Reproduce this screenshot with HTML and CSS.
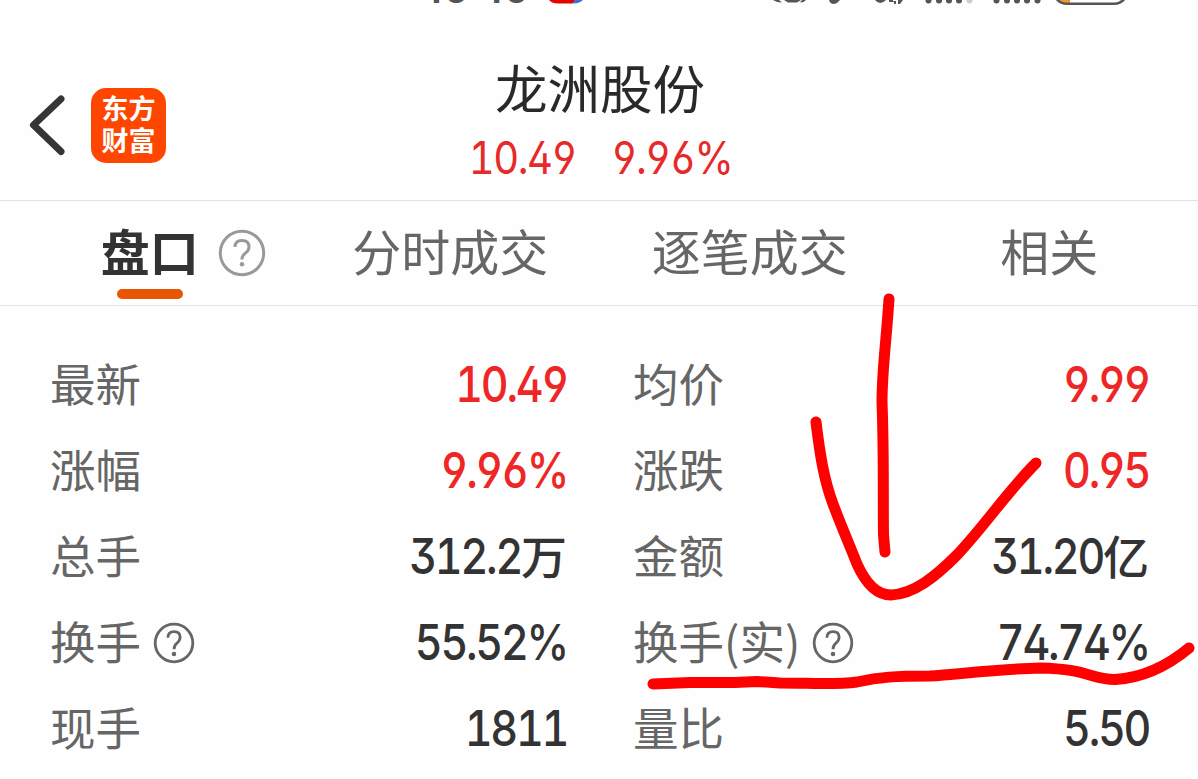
FILE: index.html
```html
<!DOCTYPE html>
<html lang="zh-CN">
<head>
    <meta charset="UTF-8">
    <title>龙洲股份</title>
    <link rel="stylesheet" href="styles.css">
</head>
<body>
<div class="page">
    <div class="statusbar">
        <div class="clock"><span>10</span><span>10</span></div>
        <svg class="status-icons" width="1198" height="8" viewBox="0 0 1198 8">
            <path d="M549 0Q552 3.500 558 3.500H572L576 0Z" fill="#e60000"/>
            <path d="M576 0L571 3.500Q579 4 583 0Z" fill="#3b6fd0"/>
            <g fill="#555">
                <path d="M773 0Q777 2.500 782 2.500L779 0ZM784 0L788 2.500H797L801 0ZM802 0L800 2.500Q804 2.500 806 0Z"/>
                <path d="M829 0Q830 4 834 4Q838 3 840 0Z"/>
                <path d="M875 0Q880 6 886 0ZM889 0H893V1H896V4H894V2H889ZM898 0H903L900 4H898Z"/>
            </g>
            <g stroke="#555" stroke-width="6" stroke-linecap="round">
                <path d="M928.500-3V.5M939-3V.5M949-3V.5M959-3V.5M996.500-3V.5M1007-3V.5M1017-3V.5M1027-3V.5M1037.500-3V.5"/>
                <path d="M969.500-3V.5" stroke="#ccc"/>
            </g>
            <path d="M1060 0H1070V3Q1063 3 1060 0Z" fill="#f7941d"/>
            <path d="M1056-2Q1060 3.800 1067 3.800H1114Q1121 3.800 1125-2" fill="none" stroke="#555" stroke-width="2.600"/>
        </svg>
    </div>

    <header class="header">
        <div class="left">
            <svg class="back" width="38" height="64" viewBox="0 0 38 64">
                <path d="M33 6L5.500 32L33 58.500" fill="none" stroke="#333536" stroke-width="7" stroke-linecap="round" stroke-linejoin="round"/>
            </svg>
            <div class="logo">东方<br>财富</div>
        </div>
        <div class="stock">
            <h1>龙洲股份</h1>
            <div class="quote"><span class="num">10.49</span><span class="num">9.96%</span></div>
        </div>
    </header>

    <nav class="tabs">
        <div class="tab active">盘口
            <svg class="tab-help" width="48" height="48" viewBox="0 0 48 48">
                <circle cx="24" cy="24" r="21.700"/>
                <path d="M17 18Q17 11.500 24 11.500Q31 11.500 31 18Q31 21.500 27.500 24Q24 26.500 24 30.500"/>
                <circle class="dot" cx="24" cy="35.300" r="2.200"/>
            </svg>
        </div>
        <div class="tab">分时成交</div>
        <div class="tab">逐笔成交</div>
        <div class="tab">相关</div>
    </nav>

    <main class="data">
        <div class="col">
            <div class="row"><span class="label">最新</span><span class="value up"><b class="num">10.49</b></span></div>
            <div class="row"><span class="label">涨幅</span><span class="value up"><b class="num">9.96%</b></span></div>
            <div class="row"><span class="label">总手</span><span class="value"><b class="num">312.2</b><i>万</i></span></div>
            <div class="row">
                <span class="label">换手</span>
                <svg class="help" width="42" height="42" viewBox="0 0 48 48">
                    <circle cx="24" cy="24" r="21.500"/>
                    <path d="M17 18Q17 11 24 11Q31 11 31 17.500Q31 21 27.500 24Q24 27 24 31"/>
                    <circle class="dot" cx="24" cy="36.500" r="2.600"/>
                </svg>
                <span class="value"><b class="num">55.52%</b></span>
            </div>
            <div class="row"><span class="label">现手</span><span class="value"><b class="num">1811</b></span></div>
        </div>
        <div class="col">
            <div class="row"><span class="label">均价</span><span class="value up"><b class="num">9.99</b></span></div>
            <div class="row"><span class="label">涨跌</span><span class="value up"><b class="num">0.95</b></span></div>
            <div class="row"><span class="label">金额</span><span class="value"><b class="num">31.20</b><i>亿</i></span></div>
            <div class="row">
                <span class="label">换手(实)</span>
                <svg class="help" width="42" height="42" viewBox="0 0 48 48">
                    <circle cx="24" cy="24" r="21.500"/>
                    <path d="M17 18Q17 11 24 11Q31 11 31 17.500Q31 21 27.500 24Q24 27 24 31"/>
                    <circle class="dot" cx="24" cy="36.500" r="2.600"/>
                </svg>
                <span class="value"><b class="num">74.74%</b></span>
            </div>
            <div class="row"><span class="label">量比</span><span class="value"><b class="num">5.50</b></span></div>
        </div>
    </main>

    <!-- hand-drawn marks -->
    <svg class="marks" width="1198" height="779" viewBox="0 0 1198 779">
        <path d="M889 299C886 345 882 370 882 402C884 455 883 500 883.500 535L885 552"/>
        <path d="M816 422C820 455 824 480 833 504C842 528 850 546 857 564C866 584 877 595 891 595C914 594 935 577 957 555C987 523 1006 493 1036 463"/>
        <path d="M653 684L690 682.500H735L757 681.500L780 683C810 683 835 685 857 682C880 677 895 676 930 676C960 674 1000 669 1040 668C1088 669 1090 679 1115 679.500C1140 678 1165 668 1189 648"/>
    </svg>
</div>
</body>
</html>
```

FILE: styles.css
```css
* {
    box-sizing: border-box;
}
body {
    margin: 0;
    background: #fefefe;
    font-family: "Noto Sans CJK SC", sans-serif;
    color: #333;
}
.page {
    position: relative;
    width: 1198px;
    height: 779px;
    overflow: hidden;
}
.statusbar {
    position: relative;
    height: 30px;
    overflow: hidden;
}
.clock {
    display: flex;
    gap: 15px;
    margin: -34px 0 0 425px;
    font-family: Inter, sans-serif;
    font-size: 40px;
    line-height: 46px;
    font-weight: 600;
    letter-spacing: 1px;
    color: #555;
}
.status-icons {
    position: absolute;
    left: 0;
    top: 0;
}
.header {
    display: grid;
    grid-template-columns: 400px 400px 1fr;
    height: 171px;
    border-bottom: 1px solid #e3e3e3;
}
.left {
    display: flex;
    align-items: center;
    gap: 25px;
    padding: 20px 0 0 28px;
}
.logo {
    width: 75px;
    height: 75px;
    padding-top: 4px;
    border-radius: 15px;
    background: #ff4600;
    color: #fff;
    text-align: center;
    font-size: 27px;
    line-height: 32px;
    font-weight: 700;
}
.stock {
    text-align: center;
}
.stock h1 {
    margin: 21px 0 3px;
    font-size: 52.5px;
    line-height: 70px;
    font-weight: 400;
    color: #292929;
}
/* narrow digits with open 6 and 9 */
.num {
    display: inline-block;
    font-family: Inter, sans-serif;
    font-weight: inherit;
    font-feature-settings: "ss01", "cv03", "cv04", "tnum", "kern" 0;
    letter-spacing: -2.6px;
    transform: scaleX(.86);
}
.quote {
    display: flex;
    justify-content: center;
    gap: 21px;
    padding-left: 2px;
    font-size: 45px;
    line-height: 68px;
    color: #e62a2a;
}
.quote .num {
    letter-spacing: -1.6px;
    transform: scaleX(.89);
}
.tabs {
    display: grid;
    grid-template-columns: repeat(4, 1fr);
    height: 105px;
    border-bottom: 1px solid #e3e3e3;
}
.tab {
    position: relative;
    height: 104px;
    padding-left: 2px;
    text-align: center;
    font-size: 49px;
    line-height: 97px;
    color: #666;
}
.tab.active {
    padding-left: 0;
    font-weight: 700;
    color: #333;
}
.tab.active::after {
    content: "";
    position: absolute;
    left: 117px;
    bottom: 6px;
    width: 66px;
    height: 10px;
    border-radius: 5px;
    background: #e85505;
}
.tab-help {
    position: absolute;
    left: 218px;
    top: 28px;
    fill: none;
    stroke: #999;
    stroke-width: 3;
}
.tab-help .dot {
    fill: #999;
    stroke: none;
}
.data {
    display: grid;
    grid-template-columns: 517px 516px;
    column-gap: 66px;
    padding: 33px 0 0 50px;
}
.row {
    display: flex;
    align-items: center;
    height: 86px;
}
.label {
    font-size: 45.5px;
    line-height: 86px;
    color: #666;
}
.help {
    margin: 6px 0 0 12px;
    fill: none;
    stroke: #666;
    stroke-width: 3.2;
}
.help .dot {
    fill: #666;
    stroke: none;
}
.value {
    margin-left: auto;
    font-size: 50px;
    line-height: 86px;
    font-weight: 500;
}
.value .num {
    transform-origin: right;
}
.value i {
    font-style: normal;
    font-size: 46px;
}
.up {
    color: #ee2626;
}
.marks {
    position: absolute;
    left: 0;
    top: 0;
    fill: none;
    stroke: #ff0000;
    stroke-width: 11;
    stroke-linecap: round;
    stroke-linejoin: round;
}
```
